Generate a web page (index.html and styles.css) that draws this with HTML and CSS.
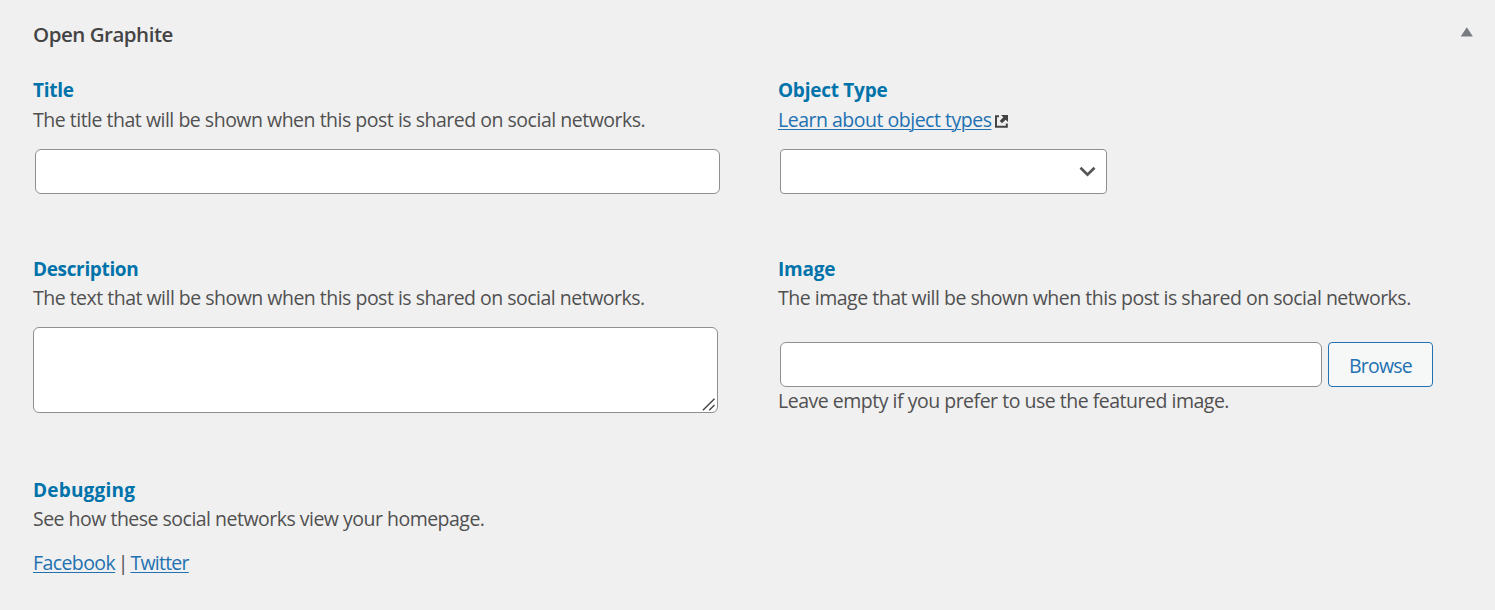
FILE: index.html
```
<!DOCTYPE html>
<html lang="en">
<head>
<meta charset="utf-8">
<title>Open Graphite</title>
<link rel="stylesheet" href="styles.css">
</head>
<body>
<section class="panel">
  <header class="panel-header">
    <h2 class="panel-title">Open Graphite</h2>
    <svg class="toggle" width="13" height="10" viewBox="0 0 13 10" aria-hidden="true"><path d="M6.800 .3 12.900 9.500H.7z" fill="#787c82"/></svg>
  </header>
  <div class="fields">
    <div class="field">
      <h3 class="label label-title">Title</h3>
      <p class="hint hint-title">The title that will be shown when this post is shared on social networks.</p>
      <input class="control text-input" type="text" aria-label="Title">
    </div>
    <div class="field">
      <h3 class="label label-type">Object Type</h3>
      <p class="hint hint-type"><a class="link" href="#">Learn about object types</a><svg class="external" width="13" height="13" viewBox="0 0 13 13" aria-hidden="true"><path d="M4 1.200H1v10.600h10.800V8.500" fill="none" stroke="#444" stroke-width="2"/><path d="M6 0h7v7l-2.300-2.300L7 8.300 4.700 6l3.600-3.700z" fill="#444"/></svg></p>
      <div class="control select"><svg width="17" height="11" viewBox="0 0 17 11" aria-hidden="true"><path d="M1.500 1.700 8.500 8.600 15.500 1.700" fill="none" stroke="#555" stroke-width="2.700"/></svg></div>
    </div>
    <div class="field">
      <h3 class="label label-description">Description</h3>
      <p class="hint hint-text">The text that will be shown when this post is shared on social networks.</p>
      <div class="control textarea"><svg width="13" height="13" viewBox="0 0 13 13" aria-hidden="true"><path d="M.9 12.300 12.500.7M7.200 12.300 12.500 7" fill="none" stroke="#444" stroke-width="1.400"/></svg></div>
    </div>
    <div class="field">
      <h3 class="label label-image">Image</h3>
      <p class="hint hint-image">The image that will be shown when this post is shared on social networks.</p>
      <div class="picker">
        <input class="control image-input" type="text" aria-label="Image">
        <button class="browse" type="button">Browse</button>
      </div>
      <p class="hint hint-empty">Leave empty if you prefer to use the featured image.</p>
    </div>
    <div class="field">
      <h3 class="label label-debug">Debugging</h3>
      <p class="hint hint-debug">See how these social networks view your homepage.</p>
      <p class="hint networks"><a class="link facebook" href="#">Facebook</a><span>|</span><a class="link twitter" href="#">Twitter</a></p>
    </div>
  </div>
</section>
</body>
</html>
```
FILE: styles.css
```
* { box-sizing: border-box; }
body {
  margin: 0;
  background: #f0f0f1;
  color: #505050;
  font: 19.5px/29px "Open Sans", "Noto Sans", sans-serif;
  letter-spacing: -0.49px;
}
.panel { height: 610px; padding: 19px 0 0 33px; overflow: hidden; }
.panel-header { display: flex; justify-content: space-between; height: 57px; padding-right: 22px; }
.panel-title { margin: 0; color: #444; font-size: 20.5px; font-weight: 600; line-height: 30px; letter-spacing: -0.48px; white-space: nowrap; }
.toggle { margin-top: 8px; }
.fields { display: grid; grid-template-columns: 745px 1fr; grid-template-rows: 179px 221px auto; }
.label { height: 28px; margin: 0; color: #0073aa; font-size: 19px; font-weight: 700; line-height: 29px; letter-spacing: -0.25px; white-space: nowrap; }
.label-description { letter-spacing: -0.35px; }
.label-debug { letter-spacing: 0.2px; }
.hint { margin: 0; white-space: nowrap; }
.hint-title, .hint-type { height: 30px; padding-top: 1px; }
.hint-text { letter-spacing: -0.51px; }
.hint-debug { letter-spacing: -0.51px; }
.link { color: #2271b1; text-decoration: underline; text-decoration-thickness: 1px; text-underline-offset: 2px; }
.control { display: block; border: 1px solid #8c8f94; border-radius: 6px; background: #fff; }
.text-input { width: 685px; height: 45px; margin: 15px 2px 0; }
.external { margin-left: 4px; vertical-align: -1px; }
.select { display: flex; align-items: center; justify-content: flex-end; width: 327px; height: 45px; margin: 15px 2px 0; padding-right: 10.500px; border-radius: 4px; }
.textarea { display: flex; align-items: flex-end; justify-content: flex-end; width: 685px; height: 86px; margin-top: 15px; padding: 0 2px 1px 0; }
.picker { display: flex; gap: 6px; height: 44px; margin: 30px 2px 0; }
.image-input { width: 542px; height: 45px; }
.browse { width: 105px; height: 45px; padding: 1px 0 0; border: 1px solid #2271b1; border-radius: 4px; background: #f6f7f7; color: #2271b1; font: 19.5px/29px "Open Sans", "Noto Sans", sans-serif; letter-spacing: -0.75px; }
.networks { display: flex; gap: 2.500px; margin-top: 15px; }
.facebook { letter-spacing: -0.58px; }
.twitter { letter-spacing: -0.75px; }
```
